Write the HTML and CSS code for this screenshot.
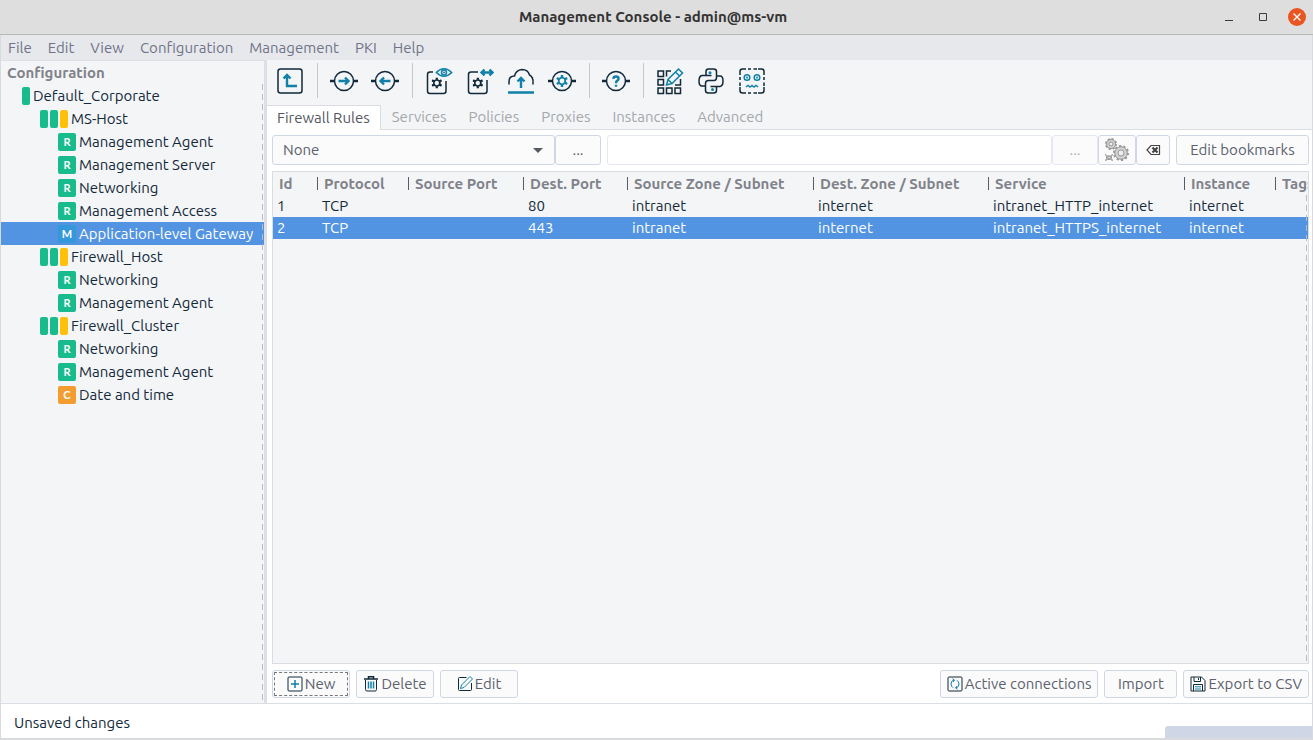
FILE: index.html
```html
<!DOCTYPE html>
<html lang="en">
<head>
<meta charset="utf-8">
<title>Management Console - admin@ms-vm</title>
<link rel="stylesheet" href="styles.css">
</head>
<body>
<div class="window">
  <header class="titlebar">
    <h1 class="title">Management Console - admin@ms-vm</h1>
    <div class="window-controls">
      <button class="control" aria-label="Minimize"><svg width="10" height="10" viewBox="0 0 10 10"><path d="M1 8.500h8" stroke="#3d3d3d"/></svg></button>
      <button class="control" aria-label="Maximize"><svg width="10" height="10" viewBox="0 0 10 10"><path d="M1.500 1.500h7v7h-7z" fill="none" stroke="#3d3d3d"/></svg></button>
      <button class="control close" aria-label="Close"><svg width="10" height="10" viewBox="0 0 10 10"><path d="M1.500 1.500l7 7M8.500 1.500l-7 7" stroke="#fff" stroke-width="1.400"/></svg></button>
    </div>
  </header>

  <nav class="menubar">
    <button>File</button><button>Edit</button><button>View</button><button>Configuration</button><button>Management</button><button>PKI</button><button>Help</button>
  </nav>

  <div class="main">
    <aside class="sidebar">
      <h2 class="sidebar-title">Configuration</h2>
      <ul class="tree">
        <li class="node site"><span class="bar"></span><span>Default_Corporate</span></li>
        <li class="node host"><span class="bar"></span><span class="bar"></span><span class="bar amber"></span><span>MS-Host</span></li>
        <li class="node item"><span class="badge">R</span><span>Management Agent</span></li>
        <li class="node item"><span class="badge">R</span><span>Management Server</span></li>
        <li class="node item"><span class="badge">R</span><span>Networking</span></li>
        <li class="node item"><span class="badge">R</span><span>Management Access</span></li>
        <li class="node item selected"><span class="badge blue">M</span><span>Application-level Gateway</span></li>
        <li class="node host"><span class="bar"></span><span class="bar"></span><span class="bar amber"></span><span>Firewall_Host</span></li>
        <li class="node item"><span class="badge">R</span><span>Networking</span></li>
        <li class="node item"><span class="badge">R</span><span>Management Agent</span></li>
        <li class="node host"><span class="bar"></span><span class="bar"></span><span class="bar amber"></span><span>Firewall_Cluster</span></li>
        <li class="node item"><span class="badge">R</span><span>Networking</span></li>
        <li class="node item"><span class="badge">R</span><span>Management Agent</span></li>
        <li class="node item"><span class="badge orange">C</span><span>Date and time</span></li>
      </ul>
    </aside>

    <section class="content">
      <div class="toolbar">
        <button aria-label="Up"><svg class="icon" viewBox="0 0 28 28"><rect x="2" y="2" width="24" height="24" rx="2.500"/><path class="teal thick" d="M11 9v10h10M7.500 11.500L11 8l3.500 3.500"/></svg></button>
        <span class="separator"></span>
        <button aria-label="Forward"><svg class="icon" viewBox="0 0 28 28"><circle cx="14" cy="14" r="9.500"/><path class="thick" d="M0 14h4.500M23.500 14h4.500"/><path class="teal thick" d="M8.500 14h10M15 10.500l3.500 3.500l-3.500 3.500"/></svg></button>
        <button aria-label="Back"><svg class="icon" viewBox="0 0 28 28"><circle cx="14" cy="14" r="9.500"/><path class="thick" d="M0 14h4.500M23.500 14h4.500"/><path class="teal thick" d="M19.500 14h-10M13 10.500l-3.500 3.500l3.500 3.500"/></svg></button>
        <span class="separator"></span>
        <button aria-label="View configuration"><svg class="icon" viewBox="0 0 28 28"><path d="M8 5H5Q2.500 5 2.500 7.500V24q0 2.500 2.500 2.500H18.500q2.500 0 2.500-2.500V14"/><use href="#gear" x="6.300" y="10.500" width="11" height="11"/><path class="teal" d="M11.300 5.500Q19-2 26.700 5.500Q19 13 11.300 5.500z"/><circle class="teal" cx="19" cy="5.500" r="2.500"/><circle class="teal-fill" cx="19" cy="5.500" r="1"/></svg></button>
        <button aria-label="Compare configuration"><svg class="icon" viewBox="0 0 28 28"><path d="M12 5H5Q2.500 5 2.500 7.500V24q0 2.500 2.500 2.500H18.500q2.500 0 2.500-2.500V13"/><use href="#gear" x="6.300" y="10.500" width="11" height="11"/><path class="teal thick" d="M16 5.500h10M18.500 2.500l-3 3l3 3M23.500 2.500l3 3l-3 3"/></svg></button>
        <button aria-label="Upload"><svg class="icon" viewBox="0 0 28 28"><path d="M2 17.500V14.500Q2 9 7.500 9Q9 3 15 2.500Q21 2.500 22.500 8Q26.500 10 26 16V17.500"/><path class="teal thick" d="M1 25.500h26M14 21V12M10.500 14.500L14 11l3.500 3.500"/></svg></button>
        <button aria-label="Control service"><svg class="icon" viewBox="0 0 28 28"><circle cx="14" cy="14" r="9.500"/><path class="thick" d="M0 14h4.500M23.500 14h4.500"/><use class="teal" href="#gear" x="8" y="8" width="12" height="12"/></svg></button>
        <span class="separator"></span>
        <button aria-label="Check status"><svg class="icon" viewBox="0 0 28 28"><circle cx="14" cy="14" r="9.500"/><path class="thick" d="M0 14h4.500M23.500 14h4.500"/><path class="teal thick" d="M11.300 11.800Q11.500 9.500 14 9.500Q16.600 9.500 16.600 11.700Q16.600 13 15 13.900Q14 14.500 14 16.300M14 17.800v2"/></svg></button>
        <span class="separator"></span>
        <button aria-label="Edit grid"><svg class="icon" viewBox="0 0 28 28"><path d="M2 4h5.500v5.500H2zM2 12.500h5.500V18H2zM2 21h5.500v5.500H2zM10.500 21H16v5.500h-5.500zM19 21h5.500v5.500H19zM15 4h-4.500v5.500M24.500 12v6H19"/><path class="teal" d="M10.500 18l1.500-5.500L22.500 2l4 4L16 16.500zM19.500 5l4 4M12 12.500l4 4"/></svg></button>
        <button aria-label="Python"><svg class="icon" viewBox="0 0 28 28"><path d="M14.500 8.500H5Q2 9 2 14q0 5 3 5h3.500v-2.500q0-3 3-3h5.500q2.500 0 2.500-3V4.500Q19.500 2 16.500 2h-5Q9 2 9 4.500v4M13.500 19.500H23q3-.5 3-5.500q0-5-3-5h-3.500M8.500 17v6.500q0 2.500 3 2.500h5q3 0 3-2.500v-4"/><circle class="teal-fill" cx="13" cy="5.700" r="1.500"/><circle class="teal-fill" cx="15.500" cy="22.500" r="1.500"/></svg></button>
        <button aria-label="Robot"><svg class="icon" viewBox="0 0 28 28"><path d="M8 2H4.500Q2 2 2 4.500V8M20 2h3.500Q26 2 26 4.500V8M8 26H4.500Q2 26 2 23.500V20M20 26h3.500q2.500 0 2.500-2.500V20M10 2h3M15.500 2H19M10 26h3M15.500 26H19M2 10v3M2 15.500V19M26 10v3M26 15.500V19"/><circle class="teal" cx="9" cy="10.500" r="2.800"/><circle class="teal" cx="19" cy="10.500" r="2.800"/><circle class="teal-fill" cx="9" cy="10.500" r="1"/><circle class="teal-fill" cx="19" cy="10.500" r="1"/><path class="teal" d="M8 20l2-1.500l2 1.500l2-1.500l2 1.500l2-1.500l2 1.500"/></svg></button>
      </div>

      <nav class="tabs">
        <button class="tab active">Firewall Rules</button><button class="tab">Services</button><button class="tab">Policies</button><button class="tab">Proxies</button><button class="tab">Instances</button><button class="tab">Advanced</button>
      </nav>

      <div class="panel">
        <form class="filters">
          <select class="field bookmark" aria-label="Bookmark"><option>None</option></select>
          <button type="button" class="button more">...</button>
          <input class="field query" type="text" aria-label="Filter">
          <button type="button" class="button more disabled">...</button>
          <button type="button" class="button apply" aria-label="Apply filter"><svg width="26" height="26" viewBox="0 0 26 26"><g fill="#d2d2d2" stroke="#989898"><circle cx="7" cy="7" r="4.700"/><circle cx="7" cy="7" r="5" stroke-width="2" stroke-dasharray="2 1.930" fill="none"/><circle cx="7" cy="7" r="2" fill="#eee"/><circle cx="17" cy="16" r="6.300"/><circle cx="17" cy="16" r="7" stroke-width="2" stroke-dasharray="2.200 2.200" fill="none"/><circle cx="17" cy="16" r="3" fill="#eee"/><path d="M1.500 17.500l2 1.500h3l2-1.500l-1 2v2l1 2l-2-1h-3l-2 1l1-2v-2z"/><circle cx="5" cy="20.500" r="1.500"/></g></svg></button>
          <button type="button" class="button clear" aria-label="Clear filter"><svg width="15" height="12" viewBox="0 0 15 12"><path d="M5 1.500h8.500v9H5L1 6z" fill="none" stroke="#444" stroke-width="1.200"/><path d="M6.500 3.500l5 5M11.500 3.500l-5 5" stroke="#444" stroke-width="2.200"/></svg></button>
          <button type="button" class="button bookmarks">Edit bookmarks</button>
        </form>

        <div class="rules">
          <table>
            <colgroup><col class="c-id"><col class="c-protocol"><col class="c-sport"><col class="c-dport"><col class="c-szone"><col class="c-dzone"><col class="c-service"><col class="c-instance"><col></colgroup>
            <thead><tr><th>Id</th><th>Protocol</th><th>Source Port</th><th>Dest. Port</th><th>Source Zone / Subnet</th><th>Dest. Zone / Subnet</th><th>Service</th><th>Instance</th><th>Tags</th></tr></thead>
            <tbody>
              <tr><td>1</td><td>TCP</td><td></td><td>80</td><td>intranet</td><td>internet</td><td>intranet_HTTP_internet</td><td>internet</td><td></td></tr>
              <tr class="selected"><td>2</td><td>TCP</td><td></td><td>443</td><td>intranet</td><td>internet</td><td>intranet_HTTPS_internet</td><td>internet</td><td></td></tr>
            </tbody>
          </table>
        </div>

        <div class="actions">
          <button class="button action focused"><svg class="small" viewBox="0 0 16 16"><rect x="1" y="1" width="14" height="14" rx="1"/><path class="teal thick" d="M8 4v8M4 8h8"/></svg>New</button>
          <button class="button action"><svg class="small" viewBox="0 0 16 16"><path class="thick" d="M1 3h14M5.500 2.500V.8h5v1.700"/><path d="M2.500 4v9.500q0 1.500 1.500 1.500h8q1.500 0 1.500-1.500V4"/><path class="teal thick" d="M5.500 5.500v7M8 5.500v7M10.500 5.500v7"/></svg>Delete</button>
          <button class="button action"><svg class="small" viewBox="0 0 16 16"><path d="M9.500 1.500h-7q-1 0-1 1v11q0 1 1 1h11q1 0 1-1V7"/><path class="teal" d="M3.500 12.500l1-3.500l8.500-8.500l2.500 2.500L7 11.500z"/></svg>Edit</button>
          <span class="spacer"></span>
          <button class="button"><svg class="small" viewBox="0 0 16 16"><rect x="1" y="1" width="14" height="14" rx="1"/><path class="teal" d="M7 4Q3.800 4.800 4 8q.2 2.500 2 3.700M9 12q3.200-.8 3-4q-.2-2.500-2-3.700M5.500 2.800L7.500 4L6 6M10.500 13.200L8.500 12l1.500-2"/></svg>Active connections</button>
          <button class="button import">Import</button>
          <button class="button"><svg class="small" viewBox="0 0 16 16"><path d="M1 1h10.500L15 4.500V15H1zM4 1v4.500h6.500V1M8.500 2v2M3.500 15V8.500h9V15"/><path class="teal" d="M5 10.800h6M5 13h6"/></svg>Export to CSV</button>
        </div>
      </div>
    </section>
  </div>

  <footer class="statusbar"><span class="status">Unsaved changes</span><span class="memory"></span></footer>
</div>

<svg class="defs" aria-hidden="true"><symbol id="gear" viewBox="0 0 12 12"><circle cx="6" cy="6" r="3.300" fill="none" stroke-width="1.800"/><path fill="none" stroke-width="2.400" d="M6 0v2.500M6 9.500V12M.8 3l2.200 1.300M9 7.700L11.200 9M.8 9L3 7.700M9 4.300L11.200 3"/></symbol></svg>
</body>
</html>
```
FILE: styles.css
```css
* { box-sizing: border-box; }

body {
  margin: 0;
  font: 15px/20px "Ubuntu", "Noto Sans", sans-serif;
  color: #12293a;
  background: #dedede;
}

button { font: inherit; color: inherit; border: 0; background: none; padding: 0; }
h1, h2, ul { margin: 0; padding: 0; }

.window { display: flex; flex-direction: column; height: 100vh; background: #fff; border: solid #d8dade; border-width: 0 1px 2px; }

.titlebar { display: grid; grid-template-columns: 1fr auto 1fr; align-items: center; height: 35px; background: #dedede; border-bottom: 1px solid #b8b8b8; margin: 0 -1px; padding-right: 7px; }
.title { grid-column: 2; font-size: 15px; line-height: 20px; font-weight: bold; color: #333; }
.window-controls { display: flex; justify-content: flex-end; gap: 16px; }
.control { display: flex; align-items: center; justify-content: center; width: 18px; height: 18px; border-radius: 50%; }
.close { background: #e95420; }

.menubar { display: flex; gap: 16px; height: 25px; padding: 0 7px; background: #e7e8ec; color: #6f7488; }

.main { display: flex; flex: 1; min-height: 0; border-bottom: 1px solid #dadee5; }

.sidebar { flex: 0 0 266px; display: flex; flex-direction: column; background: #f4f5f7; border-top: 1px solid #dcdfe5; border-right: 3px solid #dcdfe5; }
.sidebar-title { font-size: 15px; line-height: 23px; color: #80828a; padding-left: 6px; }
.tree {
  flex: 1; list-style: none; position: relative;
}
.tree::after, .rules::after {
  content: ""; position: absolute; top: 0; right: 1px; bottom: 0; width: 1px;
  background: repeating-linear-gradient(#b9bbbf 0 6px, transparent 6px 10px);
}
.node { display: flex; align-items: center; gap: 2px; height: 23px; white-space: nowrap; }
.site { padding-left: 21px; }
.host { padding-left: 39px; }
.item { padding-left: 57px; }
.node span:last-child { padding-left: 1px; }
.bar { width: 8px; height: 18px; border-radius: 2px; background: #18bc8c; }
.amber { background: #ffc107; }
.badge { width: 18px; height: 18px; border-radius: 2px; background: #18bc8c; color: #fff; font: bold 11px/18px "Lato", sans-serif; text-align: center; }
.blue { background: #3498db; }
.orange { background: #f39c2f; }
.selected { background: #5294e2; color: #fff; }

.content { flex: 1; min-width: 0; display: flex; flex-direction: column; background: #f4f5f7; }
.toolbar { display: flex; align-items: center; height: 45px; padding: 0 2px 4px; }
.toolbar button { display: flex; justify-content: center; width: 41px; }
.separator { width: 1px; height: 35px; margin: 0 5px 0 7px; background: #c6c8cc; }
.icon { width: 28px; height: 28px; }
.icon, .small { fill: none; stroke: #12293a; stroke-width: 1.5; }
.small { width: 16px; height: 16px; stroke-width: 1; }
.teal { stroke: #1080a8; }
.teal-fill { fill: #1080a8; stroke: none; }
.icon .thick { stroke-width: 2.4; }
.small .thick { stroke-width: 1.5; }
.defs { position: absolute; width: 0; height: 0; }

.tabs { display: flex; height: 25px; border-bottom: 1px solid #dadce2; }
.tab { padding: 0 11px; color: #a5a7ac; }
.tab.active { height: 25px; padding: 0 10px; background: #fff; color: #55575f; border: 1px solid #dadce2; border-width: 1px 1px 0 0; }

.panel { flex: 1; min-height: 0; display: flex; flex-direction: column; gap: 6px; padding: 5px 3px 5px 5px; background: #fff; }
.filters { display: flex; height: 30px; }
.button, .field { border: 1px solid #cfd6e6; border-radius: 3px; background: #fbfbfc; color: #5c616c; font: inherit; }
.button { display: inline-flex; align-items: center; justify-content: center; gap: 2px; white-space: nowrap; }
.bookmark { flex: 0 1 283px; appearance: none; padding: 0 10px; background: #fbfbfc url("data:image/svg+xml,%3Csvg xmlns='http://www.w3.org/2000/svg' width='10' height='5'%3E%3Cpath d='M0 0h10L5 5z' fill='%23555962'/%3E%3C/svg%3E") no-repeat right 11px center; }
.more { width: 46px; }
.query { flex: 1; min-width: 0; margin-left: 6px; background: #fff; border-color: #e5e8f0; }
.disabled { border-color: #e5e8f0; color: #aeb0b5; }
.apply { width: 38px; }
.clear { width: 34px; }
.bookmarks { width: 133px; margin-left: 6px; }

.rules { flex: 1; min-height: 0; position: relative; overflow: hidden; border: 1px solid #dadce2; background: #f4f5f7; }
table { width: 100%; table-layout: fixed; border-collapse: collapse; }
.c-id { width: 44px; }
.c-protocol { width: 91px; }
.c-sport { width: 115px; }
.c-dport { width: 104px; }
.c-szone { width: 186px; }
.c-dzone { width: 175px; }
.c-service { width: 196px; }
.c-instance { width: 91px; }
th { height: 23px; padding: 0 0 0 7px; text-align: left; font-weight: bold; color: #80828a; white-space: nowrap; overflow: hidden; background: linear-gradient(#5a5c62, #5a5c62) no-repeat 0 5px / 1px 13px; }
th:first-child { padding-left: 6px; background: none; }
td { height: 22px; padding: 0 5px; line-height: 22px; white-space: nowrap; }
td:first-child { padding-left: 4px; }
.rules::after { top: 23px; }

.actions { display: flex; gap: 6px; height: 28px; }
.actions .button { padding: 0 6px; }
.actions .action { width: 78px; }
.actions .import { width: 73px; }
.focused { outline: 1px dashed #777; outline-offset: -3px; }
.spacer { flex: 1; }

.statusbar { display: flex; justify-content: space-between; align-items: center; height: 34px; padding-left: 13px; }
.status { padding-top: 4px; }
.memory { align-self: flex-end; width: 147px; height: 12px; background: #cfd6e6; border-radius: 3px 0 0 0; }
```
